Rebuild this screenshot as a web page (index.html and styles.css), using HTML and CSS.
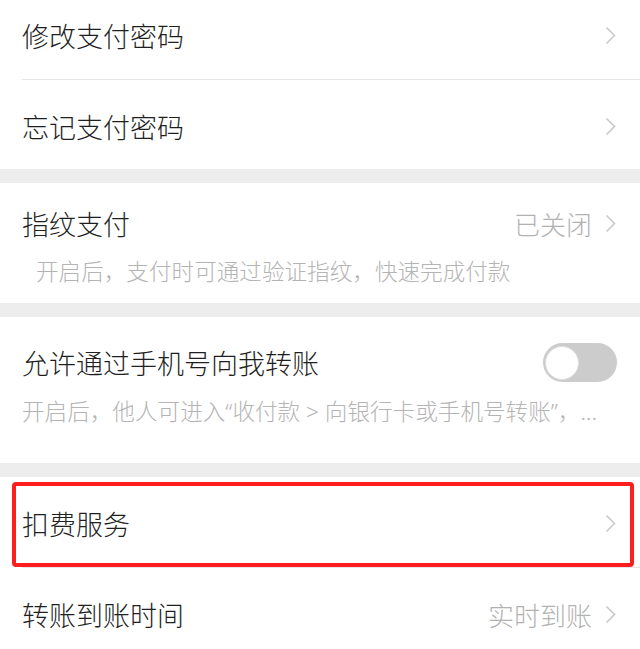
FILE: index.html
```html
<!DOCTYPE html>
<html>
<head>
  <meta charset="utf-8">
  <link rel="stylesheet" href="styles.css">
</head>
<body>
  <div class="page">
    <div class="group first">
      <div class="row">
        <span class="title">修改支付密码</span>
        <svg class="chevron" viewBox="0 0 11 19"><polyline points="1.5,1.5 9.5,9.5 1.5,17.5"/></svg>
      </div>
      <div class="row">
        <span class="title">忘记支付密码</span>
        <svg class="chevron" viewBox="0 0 11 19"><polyline points="1.5,1.5 9.5,9.5 1.5,17.5"/></svg>
      </div>
    </div>

    <div class="group finger">
      <div class="head">
        <span class="title">指纹支付</span>
        <span class="value">已关闭</span>
        <svg class="chevron" viewBox="0 0 11 19"><polyline points="1.5,1.5 9.5,9.5 1.5,17.5"/></svg>
      </div>
      <p class="hint">开启后，支付时可通过验证指纹，快速完成付款</p>
    </div>

    <div class="group phone">
      <div class="head">
        <span class="title">允许通过手机号向我转账</span>
        <div class="switch"><div class="knob"></div></div>
      </div>
      <p class="hint">开启后，他人可进入“收付款 &gt; 向银行卡或手机号转账”，...</p>
    </div>

    <div class="group last">
      <div class="row marked">
        <span class="title">扣费服务</span>
        <svg class="chevron" viewBox="0 0 11 19"><polyline points="1.5,1.5 9.5,9.5 1.5,17.5"/></svg>
        <div class="annotation"></div>
      </div>
      <div class="row">
        <span class="title">转账到账时间</span>
        <span class="value">实时到账</span>
        <svg class="chevron" viewBox="0 0 11 19"><polyline points="1.5,1.5 9.5,9.5 1.5,17.5"/></svg>
      </div>
    </div>
  </div>
</body>
</html>
```

FILE: styles.css
```css
body {
  margin: 0;
  background: #ededed;
  font-family: "Noto Sans CJK SC", "Noto Sans", sans-serif;
}

.page {
  padding-top: 1px;
}

.group {
  background: #fff;
  margin-bottom: 14px;
  padding-left: 22px;
}

.group.first {
  margin-top: -12px;
}

.group.last {
  margin-bottom: 0;
  padding-bottom: 20px;
}

.row {
  height: 90px;
  padding: 3px 24px 0 0;
  box-sizing: border-box;
  display: flex;
  align-items: center;
}

.row + .row {
  border-top: 1px solid #e6e6e6;
}

.title {
  flex: 1;
  font-size: 27px;
  font-weight: 300;
  color: #1f1f1f;
  white-space: nowrap;
}

.value {
  font-size: 26px;
  font-weight: 300;
  color: #b2b2b2;
  margin-right: 13px;
}

.chevron {
  width: 11px;
  height: 19px;
  fill: none;
  stroke: #c9c9c9;
  stroke-width: 1.6;
}

/* fingerprint block */
.finger .head {
  height: 80px;
  padding-right: 24px;
  display: flex;
  align-items: center;
}

.hint {
  margin: 0;
  font-family: "Noto Sans", "Noto Sans CJK SC", sans-serif;
  font-size: 22.6px;
  font-weight: 300;
  line-height: 18px;
  color: #b4b4b4;
  white-space: nowrap;
}

.finger .hint {
  padding: 0 0 22px 14px;
}

/* phone transfer block */
.phone .head {
  height: 86px;
  padding: 5px 23px 0 0;
  box-sizing: border-box;
  display: flex;
  align-items: center;
}

.phone .hint {
  padding-bottom: 42px;
}

.switch {
  width: 74px;
  height: 39px;
  border-radius: 20px;
  background: #cccccc;
  display: flex;
  align-items: center;
  padding-left: 2px;
  box-sizing: border-box;
}

.knob {
  width: 34px;
  height: 34px;
  border-radius: 50%;
  background: #fff;
  border: 1px solid #dedede;
  box-sizing: border-box;
}

/* red annotation box */
.marked {
  position: relative;
}

.annotation {
  position: absolute;
  top: 5px;
  left: -10px;
  right: 6px;
  bottom: 0;
  border: 4px solid #ff1d1d;
  border-radius: 4px;
}
```
